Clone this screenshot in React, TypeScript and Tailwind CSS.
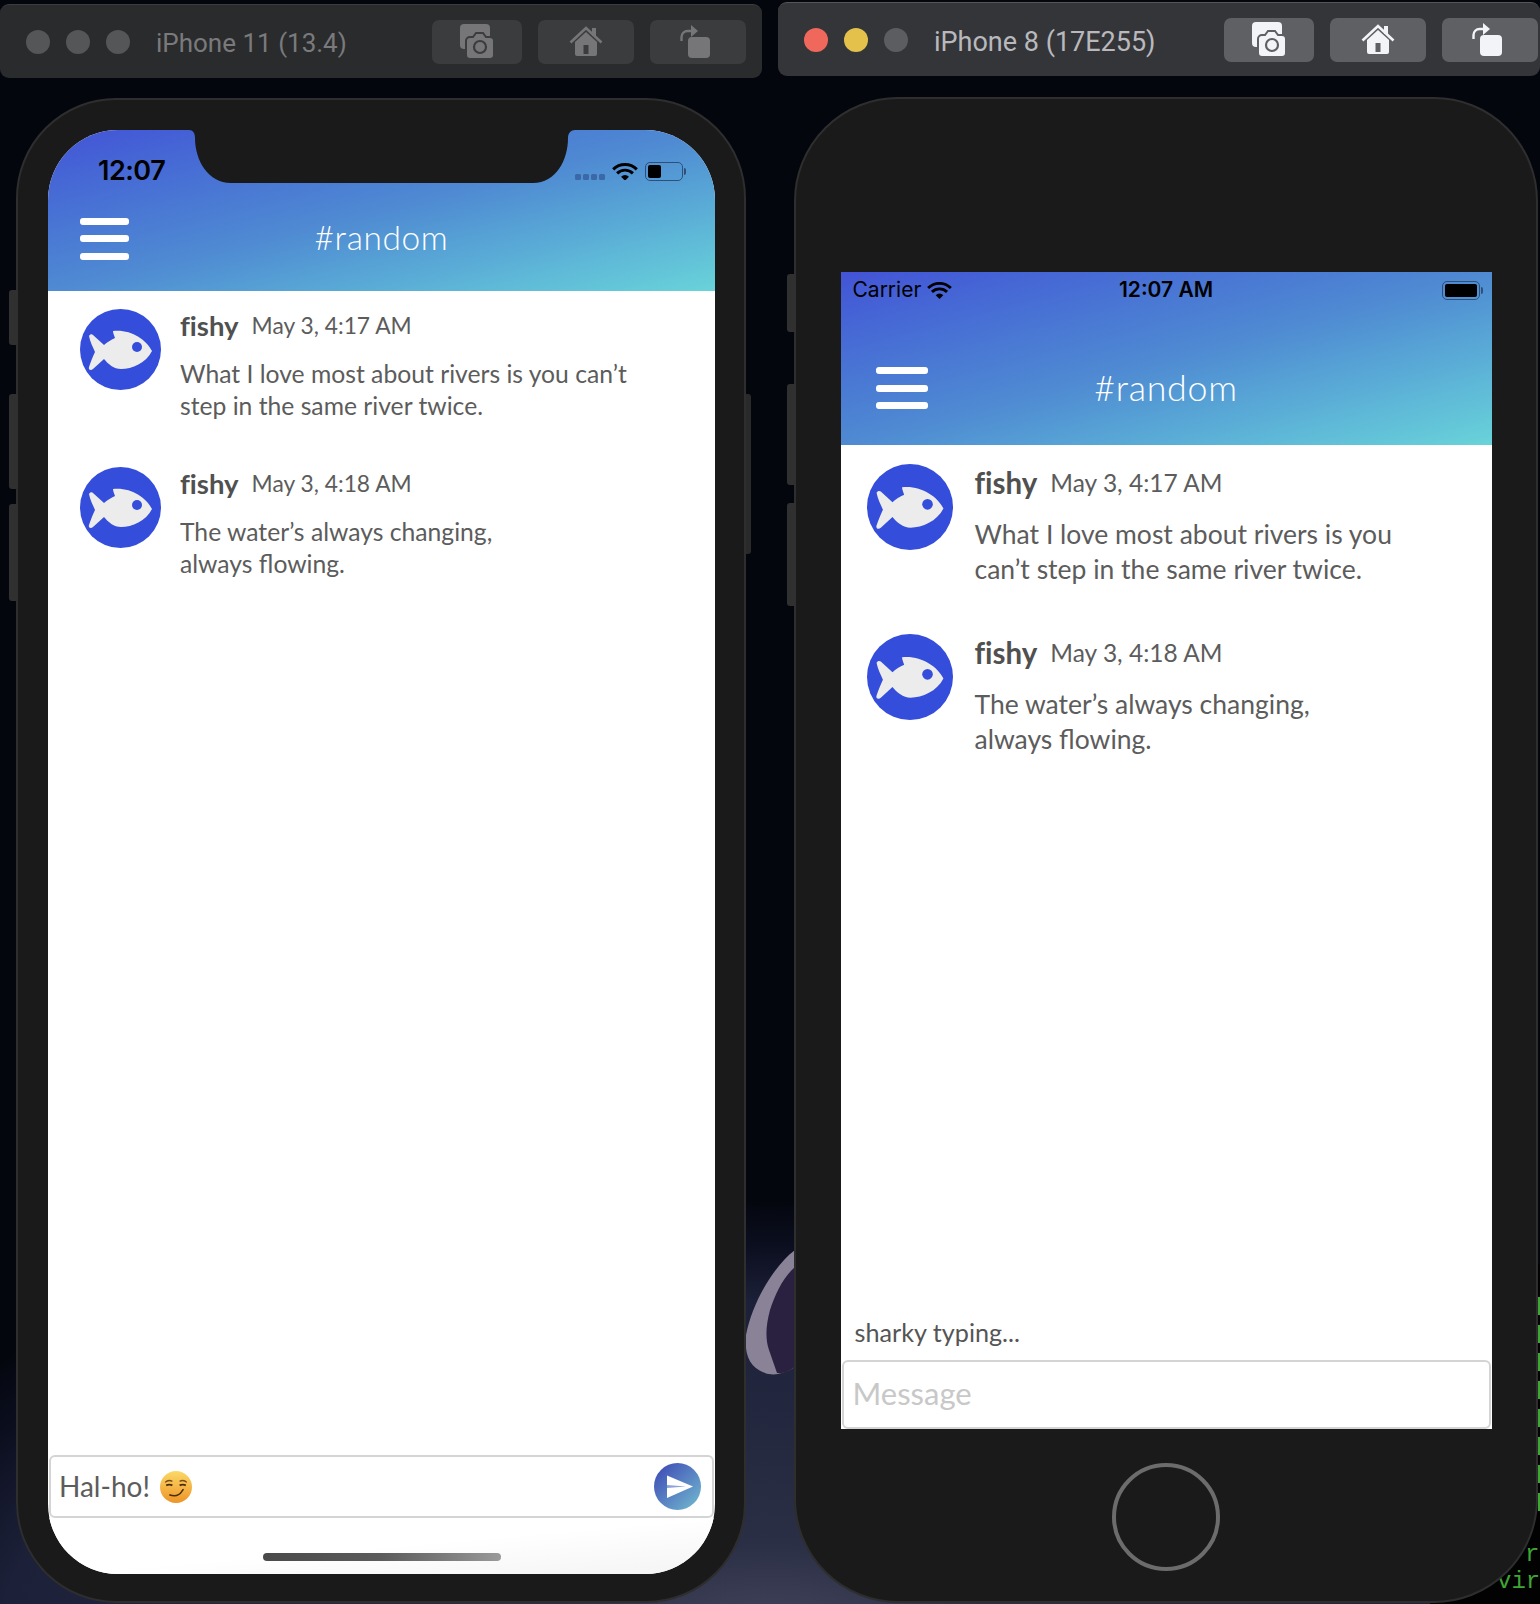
import React from "react";

function Camera({ c, bg }: { c: string; bg: string }) {
  return (
    <svg width="34" height="35" viewBox="0 0 34 35">
      <rect x="0" y="0" width="30" height="25" rx="4" fill={c} />
      <path d="M6 17a4 4 0 0 1 4-4h3l3-4h7l3 4h4a4 4 0 0 1 4 4v14a4 4 0 0 1-4 4H10a4 4 0 0 1-4-4z" fill={c} stroke={bg} strokeWidth="2" />
      <circle cx="20" cy="23" r="6" fill={c} stroke={bg} strokeWidth="2.2" />
    </svg>
  );
}

function Home({ c, bg }: { c: string; bg: string }) {
  return (
    <svg width="34" height="31" viewBox="0 0 34 31">
      <path d="M1.5 16.5 17 2l15.5 14.5" fill="none" stroke={c} strokeWidth="2.6" />
      <rect x="23" y="2" width="4" height="8" fill={c} />
      <path d="M6 16 17 6l11 10v12a2 2 0 0 1-2 2H8a2 2 0 0 1-2-2z" fill={c} />
      <rect x="14.500" y="19" width="5" height="9" fill={bg} />
    </svg>
  );
}

function Rotate({ c }: { c: string }) {
  return (
    <svg width="30" height="33" viewBox="0 0 30 33" className="-ml-[7px]">
      <rect x="8" y="12" width="22" height="21" rx="4" fill={c} />
      <path d="M1.500 16V12a6 6 0 0 1 6-6H12" fill="none" stroke={c} strokeWidth="2.400" />
      <path d="M11 0l7 6-7 6z" fill={c} />
    </svg>
  );
}

function Toolbar({ title, active }: { title: string; active: boolean }) {
  const ic = active ? "#f3f4f7" : "#767678";
  const bg = active ? "#5f6063" : "#3b3c3e";
  const btn = active ? "bg-[#5f6063]" : "bg-[#3b3c3e]";
  return (
    <div className={`w-[762px] h-[74px] shrink-0 rounded-[9px] flex items-center font-['Roboto',sans-serif] ${active ? "bg-[#343539] border-t border-[#55565a]" : "bg-[#2a2b2d] border-t border-[#3b3c3e]"}`}>
      <div className="flex gap-4 ml-[26px]">
        <div className={`w-6 h-6 rounded-full ${active ? "bg-[#f0685c]" : "bg-[#555658]"}`} />
        <div className={`w-6 h-6 rounded-full ${active ? "bg-[#e3c14b]" : "bg-[#555658]"}`} />
        <div className={`w-6 h-6 rounded-full ${active ? "bg-[#5c5d60]" : "bg-[#555658]"}`} />
      </div>
      <div className={`ml-[26px] w-[270px] leading-8 whitespace-nowrap ${active ? "pt-[4px] text-[27px] text-[#b9b9bd]" : "pt-[2px] text-[26px] text-[#7a7a7c]"}`}>{title}</div>
      <div className={`flex gap-4 ${active ? "ml-[20px]" : "ml-[6px]"}`}>
        <div className={`w-[90px] h-[44px] rounded-[7px] ${btn} flex items-center justify-center`}><Camera c={ic} bg={bg} /></div>
        <div className={`w-[96px] h-[44px] rounded-[7px] ${btn} flex items-center justify-center`}><Home c={ic} bg={bg} /></div>
        <div className={`w-[96px] h-[44px] rounded-[7px] ${btn} flex items-center justify-center`}><Rotate c={ic} /></div>
      </div>
    </div>
  );
}

function Fish({ size }: { size: number }) {
  return (
    <svg width={size} height={size} viewBox="0 0 81 81" className="shrink-0">
      <circle cx="40.5" cy="40.5" r="40.5" fill="#344ddb" />
      <path d="M9 27C10 25 12 25 13 26L24 36C27 33 31 31 35 29C34 26 33 24 33 22C50 20 66 30 72 42C66 54 52 60 41 60C34 60 28 55 24 50L13 60C11 62 8 61 9 58C11 52 13 47 15 43C13 38 10 33 9 27Z" fill="#ececec" />
      <circle cx="57" cy="38" r="5" fill="#344ddb" />
    </svg>
  );
}

function Wifi({ w }: { w: number }) {
  return (
    <svg width={w} height={w * 0.72} viewBox="0 0 26 19" className="shrink-0">
      <path d="M1 7.5a17 17 0 0 1 24 0M5 11.5a11.500 11.500 0 0 1 16 0" fill="none" stroke="#000" strokeWidth="3" />
      <path d="M9 15a5.500 5.500 0 0 1 8 0l-4 4z" fill="#000" />
    </svg>
  );
}

function Battery({ full }: { full: boolean }) {
  return (
    <div className="flex items-center gap-[1px]">
      <div className="w-[38px] h-[19px] rounded-[5px] border border-[#2f4f78] p-[2px] flex">
        <div className={`h-full rounded-[2px] bg-black ${full ? "w-full" : "w-[13px]"}`} />
      </div>
      <div className="w-[2px] h-[7px] rounded-r-sm bg-[#2f4f78]" />
    </div>
  );
}

function Burger({ w }: { w: number }) {
  return (
    <div className="flex flex-col gap-[10.500px]" style={{ width: w }}>
      <div className="h-[7px] rounded-[3px] bg-white" />
      <div className="h-[7px] rounded-[3px] bg-white" />
      <div className="h-[7px] rounded-[3px] bg-white" />
    </div>
  );
}

function Message({ big, time, lines }: { big: boolean; time: string; lines: string[] }) {
  return (
    <div className={`flex ${big ? "gap-[22px]" : "gap-[19px]"}`}>
      <Fish size={big ? 86 : 81} />
      <div className="text-[#5c5c5c] whitespace-nowrap">
        <div className={`flex items-center gap-[13px] ${big ? "h-[38px]" : "h-[33px]"}`}>
          <span className={`font-bold text-[#505050] [font-variant-ligatures:none] ${big ? "text-[29.500px]" : "text-[27.500px]"}`}>fishy</span>
          <span className={big ? "text-[24.500px]" : "text-[22.800px]"}>{time}</span>
        </div>
        <div className={big ? "mt-[15px] text-[26.500px] leading-[35px]" : "mt-[16px] text-[24.700px] leading-[32px]"}>
          {lines.map((l) => <div key={l}>{l}</div>)}
        </div>
      </div>
    </div>
  );
}

function SideBtn({ cls }: { cls: string }) {
  return <div className={`absolute w-[9px] bg-[#303030] rounded-l-[3px] ${cls}`} />;
}

function Emoji() {
  return (
    <svg width="32" height="32" viewBox="0 0 31 31" className="shrink-0">
      <defs>
        <linearGradient id="em" x1="0" y1="0" x2="0" y2="1">
          <stop offset="0" stopColor="#fbd968" />
          <stop offset="1" stopColor="#ee9427" />
        </linearGradient>
      </defs>
      <circle cx="15.500" cy="15.500" r="15.500" fill="url(#em)" />
      <path d="M5 11q3-3 7-1M19 10q4-2 7 1" fill="none" stroke="#7a4a12" strokeWidth="1.300" />
      <path d="M6 14q3-1.500 6 0M19 14q3-1.500 6 0" fill="none" stroke="#4a2c0a" strokeWidth="1.800" />
      <path d="M9 23q8 3 12-3q1-2 2-2" fill="none" stroke="#4a2c0a" strokeWidth="1.500" />
    </svg>
  );
}

function Send() {
  return (
    <svg width="47" height="47" viewBox="0 0 47 47" className="shrink-0">
      <defs>
        <linearGradient id="sn" x1="0" y1="0" x2="1" y2="1">
          <stop offset="0" stopColor="#3c44b4" />
          <stop offset="1" stopColor="#73bdd0" />
        </linearGradient>
      </defs>
      <circle cx="23.500" cy="23.500" r="23.500" fill="url(#sn)" />
      <path d="M13 12.500 39 23.500 13 35z" fill="#fff" />
      <path d="M13 22 32 23.500 13 25z" fill="#8ea3d8" />
    </svg>
  );
}

export default function App() {
  return (
    <div className="relative w-[1540px] h-[1604px] overflow-hidden flex font-['Lato',sans-serif] bg-[#04060e] bg-[radial-gradient(ellipse_1000px_440px_at_770px_1640px,#45475c_0%,#2b2f46_22%,#1c2038_77%,#0b0e1e_90%,#04060e_100%)]">
      <div className="absolute right-0 bottom-0 w-[110px] h-[340px] bg-[#020203] font-['Liberation_Mono',monospace] text-[#3fa535] text-[24px] leading-[27px] whitespace-nowrap">
        <div className="pt-[277px] pl-[95px]">r</div>
        <div className="pl-[67px]">vir</div>
      </div>
      <div className="absolute right-0 top-[1297px] w-[2px] h-[223px] bg-[repeating-linear-gradient(180deg,#3fa535_0px,#3fa535_18px,transparent_18px,transparent_28px)]" />
      <svg width="50" height="130" viewBox="0 0 50 130" className="absolute left-[745px] top-[1250px]">
        <path d="M50 0C30 15 8 50 1 85C-1 105 5 118 20 123C30 127 42 122 50 117Z" fill="#8a8296" />
        <path d="M50 17C38 27 30 45 25 60C21 75 20 88 24 100L32 123C40 124 45 120 50 117Z" fill="#2a2040" />
      </svg>

      <div className="relative w-[778px] shrink-0 flex flex-col pt-1">
        <Toolbar title="iPhone 11 (13.4)" active={false} />
        <div className="relative ml-[16px] mt-[20px] w-[730px] h-[1505px] rounded-[100px] border-2 border-[#2e2e2e] bg-[#1a1a1a] pt-[30px] pl-[30px]">
          <SideBtn cls="-left-[9px] top-[190px] h-[55px]" />
          <SideBtn cls="-left-[9px] top-[294px] h-[95px]" />
          <SideBtn cls="-left-[9px] top-[404px] h-[97px]" />
          <div className="absolute -right-[7px] top-[294px] w-[5px] h-[160px] bg-[#2a2a2a] rounded-r-[3px]" />
          <div className="relative w-[667px] h-[1444px] rounded-[70px] overflow-hidden bg-white flex flex-col text-[#5c5c5c]">
            <div className="relative h-[161px] shrink-0 bg-linear-to-br from-[#4353d6] via-[#4f8ad2] to-[#69d3d9]">
              <svg width="392" height="53" viewBox="0 0 392 53" className="absolute left-[138px] top-0">
                <path d="M3 0C7 0 9 3 9 8C9 30 22 53 45 53H347C370 53 382 30 382 8C382 3 385 0 389 0Z" fill="#1a1a1a" />
              </svg>
              <div className="pt-[26px] h-[56px] pl-[50px] pr-[29px] flex items-center justify-between">
                <span className="font-['Inter',sans-serif] font-semibold text-[27px] tracking-[-0.5px] text-black">12:07</span>
                <div className="flex items-center gap-[7px]">
                  <div className="flex gap-[2px] mt-[12px]">
                    {[0, 1, 2, 3].map((i) => <div key={i} className="w-[6px] h-[6px] rounded-[1.500px] bg-[#3d68a8]" />)}
                  </div>
                  <Wifi w={26} />
                  <Battery full={false} />
                </div>
              </div>
              <div className="mt-[22px] h-[60px] px-[32px] grid grid-cols-[1fr_auto_1fr] items-center">
                <div className="pt-[1px]"><Burger w={49} /></div>
                <span className="text-white text-[33.500px] font-light tracking-[0.6px] -mt-[1px]">#random</span>
                <span />
              </div>
            </div>
            <div className="flex-1 flex flex-col gap-[45px] pt-[18px] pl-[32px]">
              <Message big={false} time="May 3, 4:17 AM" lines={["What I love most about rivers is you can’t", "step in the same river twice."]} />
              <Message big={false} time="May 3, 4:18 AM" lines={["The water’s always changing,", "always flowing."]} />
            </div>
            <div className="mx-[1px] h-[63px] shrink-0 rounded-[6px] border-2 border-[#d4d4d4] flex items-center pl-[8px] pr-[11px] text-[28px]">
              <span className="-mt-[2px]">Hal-ho!</span>
              <span className="ml-[10px]"><Emoji /></span>
              <span className="ml-auto"><Send /></span>
            </div>
            <div className="h-[56px] shrink-0 flex justify-center pt-[35px] bg-linear-to-br from-white via-white to-[#f4f4f4]">
              <div className="w-[238px] h-[8px] rounded-full bg-linear-to-r from-[#4a4a4a] via-[#5c5c5c] to-[#9a9a9a]" />
            </div>
          </div>
        </div>
      </div>

      <div className="relative flex-1 flex flex-col pt-[2px]">
        <Toolbar title="iPhone 8 (17E255)" active />
        <div className="relative ml-[16px] mt-[21px] w-[744px] h-[1506px] rounded-[104px] border-2 border-[#2e2e2e] bg-[#1a1a1a] pt-[173px] flex flex-col items-center">
          <SideBtn cls="-left-[9px] top-[175px] h-[58px]" />
          <SideBtn cls="-left-[9px] top-[285px] h-[101px]" />
          <SideBtn cls="-left-[9px] top-[404px] h-[103px]" />
          <div className="w-[651px] h-[1157px] shrink-0 bg-white flex flex-col text-[#5c5c5c]">
            <div className="h-[173px] shrink-0 bg-linear-to-br from-[#4353d6] via-[#4f8ad2] to-[#69d3d9]">
              <div className="relative pt-[4px] h-[32px] pl-[12px] pr-[9px] flex items-center justify-between">
                <div className="flex items-center gap-[6px]">
                  <span className="font-['Inter',sans-serif] text-[21px] text-black">Carrier</span>
                  <Wifi w={25} />
                </div>
                <span className="absolute left-0 right-0 text-center font-['Inter',sans-serif] font-semibold text-[21px] text-black">12:07 AM</span>
                <Battery full />
              </div>
              <div className="mt-[54px] h-[60px] px-[35px] grid grid-cols-[1fr_auto_1fr] items-center">
                <Burger w={52} />
                <span className="text-white text-[35.800px] font-light tracking-[0.7px]">#random</span>
                <span />
              </div>
            </div>
            <div className="flex-1 flex flex-col gap-[47px] pt-[19px] pl-[26px]">
              <Message big time="May 3, 4:17 AM" lines={["What I love most about rivers is you", "can’t step in the same river twice."]} />
              <Message big time="May 3, 4:18 AM" lines={["The water’s always changing,", "always flowing."]} />
            </div>
            <div className="pl-[14px] h-[36px] text-[25.200px] leading-[32px] text-[#555]">sharky typing...</div>
            <div className="mt-[8px] mx-[1px] h-[69px] shrink-0 rounded-[6px] border-2 border-[#d4d4d4] flex items-center pl-[9px] pb-[3px] text-[31px] text-[#c8c8c8]">Message</div>
          </div>
          <div className="mt-[34px] w-[108px] h-[108px] rounded-full border-4 border-[#6c6c6c]" />
        </div>
      </div>
    </div>
  );
}
